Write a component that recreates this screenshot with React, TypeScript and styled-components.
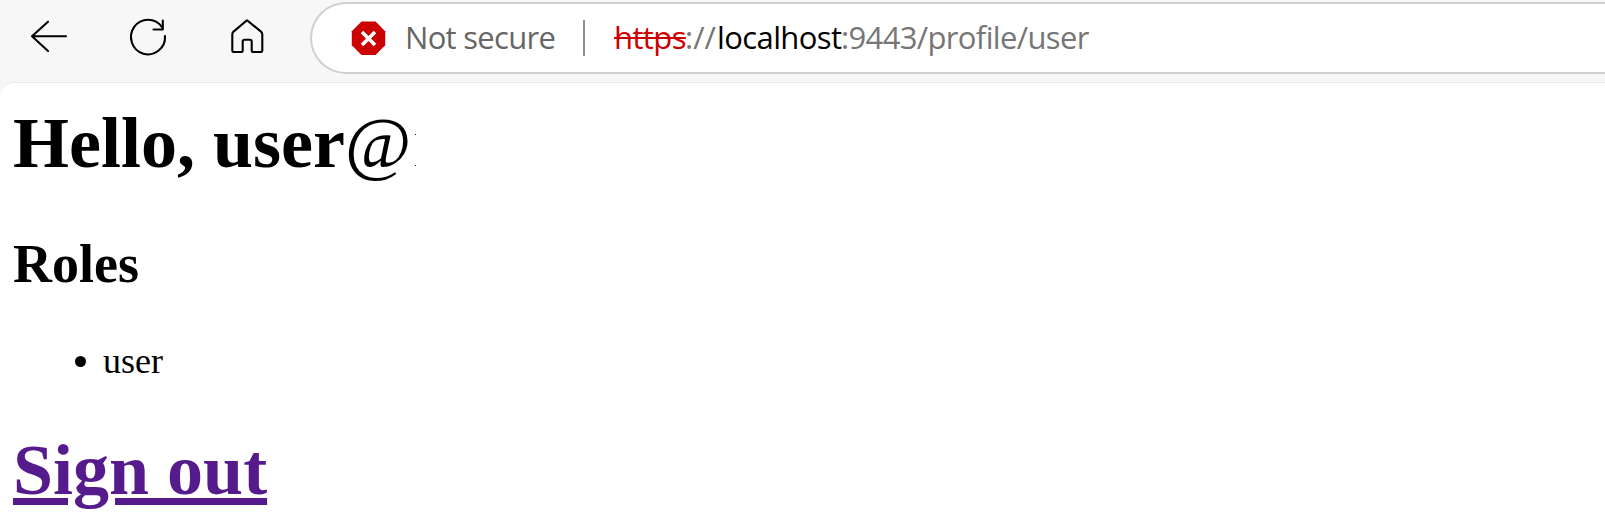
import React from "react";
import styled, { createGlobalStyle } from "styled-components";

const GlobalStyle = createGlobalStyle`
  body { margin: 0; background: #f7f7f7; overflow: hidden; }
`;

const Browser = styled.div`
  display: flex;
  flex-direction: column;
  height: 527px;
  background: #f7f7f7;
`;

const Toolbar = styled.header`
  display: flex;
  align-items: flex-start;
  height: 82px;
  flex: none;
`;

const NavButtons = styled.nav`
  display: flex;
  width: 310px;
  height: 74px;
  flex: none;
`;

const NavButton = styled.button`
  width: 99px;
  height: 74px;
  padding: 0;
  border: 0;
  background: none;
  flex: none;
  svg {
    display: block;
    fill: none;
    stroke: #000;
    stroke-width: 2.1;
    stroke-linecap: round;
    stroke-linejoin: round;
  }
`;

const AddressBar = styled.div`
  display: flex;
  align-items: center;
  box-sizing: border-box;
  flex: 1;
  height: 72px;
  margin-top: 2px;
  padding-left: 39px;
  border: 2px solid #d0d0d0;
  border-right: 0;
  border-radius: 36px 0 0 36px;
  background: #fff;
  font: 31px/40px "Open Sans", "Noto Sans", sans-serif;
  white-space: pre;
`;

const WarningIcon = styled.svg`
  width: 35px;
  height: 35px;
  flex: none;
`;

const Status = styled.span`
  width: 178px;
  margin-left: 19px;
  padding-bottom: 2px;
  color: #666;
  letter-spacing: -0.7px;
`;

const Divider = styled.span`
  width: 2px;
  height: 36px;
  background: #919191;
`;

const Address = styled.span`
  display: flex;
  margin-left: 29px;
  padding-bottom: 2px;
`;

const UrlPart = styled.span<{ $color: string; $width: number; $spacing: number }>`
  width: ${(p) => p.$width}px;
  color: ${(p) => p.$color};
  letter-spacing: ${(p) => p.$spacing}px;
`;

const Scheme = styled(UrlPart)`
  text-decoration: line-through;
  text-decoration-thickness: 2px;
`;

const Page = styled.main`
  flex: 1;
  box-sizing: border-box;
  padding: 20px 0 0 13px;
  border-top: 1px solid #e9e9e9;
  border-top-left-radius: 14px;
  background: #fff;
  color: #000;
  font-family: "Liberation Serif", "Times New Roman", serif;
`;

const Greeting = styled.h1`
  display: flex;
  margin: 0 0 51px;
  font-size: 72px;
  line-height: 80px;
  white-space: pre;
`;

const AtSign = styled.span`
  width: 67px;
  font-weight: 400;
`;

const Trace = styled.span`
  display: flex;
  flex-direction: column;
  justify-content: space-between;
  width: 1px;
  height: 32px;
  margin: 31px 0 0 3px;
  &::before,
  &::after {
    content: "";
    height: 1px;
    background: #222;
  }
`;

const SectionTitle = styled.h2`
  margin: 0 0 47px;
  font-size: 54px;
  line-height: 60px;
`;

const Roles = styled.ul`
  margin: 0 0 49px;
  padding: 0 0 0 62px;
  list-style: none;
`;

const Role = styled.li`
  display: flex;
  align-items: center;
  font-size: 36px;
  line-height: 40px;
  &::before {
    content: "";
    width: 11px;
    height: 11px;
    margin: 1px 17px 0 0;
    border-radius: 50%;
    background: #000;
  }
`;

const SignOut = styled.h1`
  margin: 0;
  font-size: 72px;
  line-height: 80px;
  a {
    color: #551a8b;
    text-decoration-thickness: 7px;
    text-underline-offset: 4px;
  }
`;

export default function App() {
  return (
    <>
      <GlobalStyle />
      <Browser>
        <Toolbar>
          <NavButtons>
            <NavButton aria-label="Back">
              <svg width="99" height="74">
                <path d="M66 36.3H32M48 21.7L32 36.3L48 51" />
              </svg>
            </NavButton>
            <NavButton aria-label="Refresh">
              <svg width="99" height="74">
                <path d="M66 36A17 17.3 0 1 1 63 27.2M63.8 20.5V29.5H54.5" />
              </svg>
            </NavButton>
            <NavButton aria-label="Home">
              <svg width="99" height="74">
                <path d="M49 20.3L63 31.6Q64.3 32.7 64.3 34.5V50.2Q64.3 52 62.5 52H55.5Q53.7 52 53.7 50.2V41.5Q53.7 39.7 52 39.7H46.5Q44.7 39.7 44.7 41.5V50.2Q44.7 52 43 52H36Q34.3 52 34.3 50.2V34.5Q34.3 32.7 35.5 31.6Z" />
              </svg>
            </NavButton>
          </NavButtons>
          <AddressBar>
            <WarningIcon viewBox="0 0 35 35">
              <path d="M10.5 .5H24.5L34.2 10.3V24.3L24.5 34H10.5L.8 24.3V10.3Z" fill="#c00" />
              <path d="M11 11L24 24M24 11L11 24" stroke="#fff" strokeWidth="3.6" />
            </WarningIcon>
            <Status>Not secure</Status>
            <Divider />
            <Address>
              <Scheme $color="#c00" $width={71} $spacing={-0.6}>https</Scheme>
              <UrlPart $color="#767676" $width={32} $spacing={0}>://</UrlPart>
              <UrlPart $color="#000" $width={124} $spacing={-0.6}>localhost</UrlPart>
              <UrlPart $color="#767676" $width={260} $spacing={-0.65}>:9443/profile/user</UrlPart>
            </Address>
          </AddressBar>
        </Toolbar>
        <Page>
          <Greeting>
            Hello, user<AtSign>@</AtSign>
            <Trace />
          </Greeting>
          <SectionTitle>Roles</SectionTitle>
          <Roles>
            <Role>user</Role>
          </Roles>
          <SignOut>
            <a href="#">Sign out</a>
          </SignOut>
        </Page>
      </Browser>
    </>
  );
}
